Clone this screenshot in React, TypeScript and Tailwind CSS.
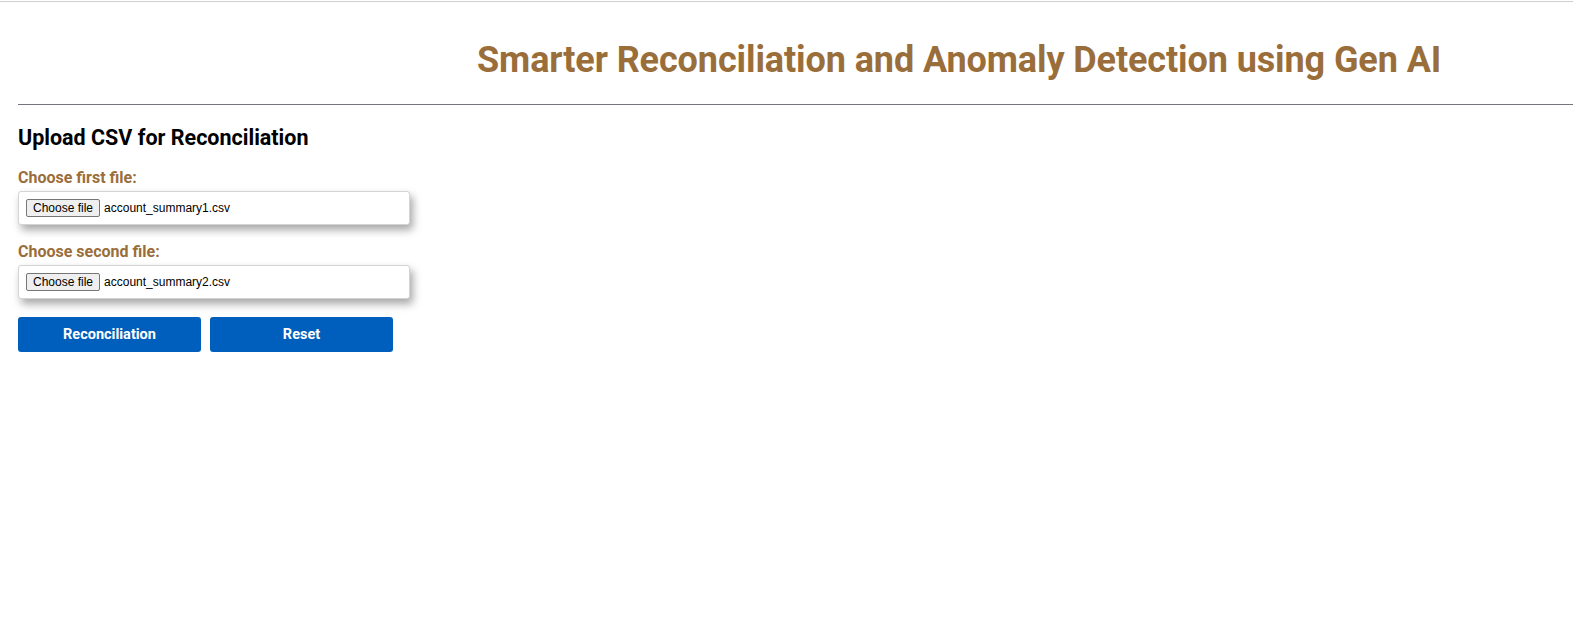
import React from "react";

function FileRow({ label, file }: { label: string; file: string }) {
  return (
    <div className="flex flex-col">
      <div className="text-[16px] font-bold leading-[20px] text-[#9a6e3a]" style={{ fontFamily: "Roboto, sans-serif" }}>
        {label}
      </div>
      <div className="mt-[3px] flex h-[34px] w-[392px] items-center rounded-[3px] border border-[#d4d4d4] bg-white px-[7px] shadow-[3px_5px_8px_rgba(0,0,0,0.35)]">
        <span
          className="flex h-[18px] items-center rounded-[2px] border border-[#767676] bg-[#efefef] px-[6px] text-[12px] text-black"
          style={{ fontFamily: "'Liberation Sans', Arial, sans-serif" }}
        >
          Choose file
        </span>
        <span className="ml-[4px] text-[12px] text-black" style={{ fontFamily: "'Liberation Sans', Arial, sans-serif" }}>
          {file}
        </span>
      </div>
    </div>
  );
}

export default function App() {
  return (
    <div className="min-h-[637px] bg-white" style={{ fontFamily: "Roboto, sans-serif" }}>
      <div className="mt-px h-px bg-[#cfcfcf]" />
      <div className="h-[102px] pl-[477px] pt-[38px]">
        <h1 className="text-[36px] font-bold leading-[40px] tracking-[-0.1px] text-[#9a6e3a]">
          Smarter Reconciliation and Anomaly Detection using Gen AI
        </h1>
      </div>
      <div className="ml-[18px] h-px bg-[#75737d]" />
      <div className="px-[18px]">
        <h2 className="mt-[20px] text-[21.5px] font-bold leading-[26px] text-black">Upload CSV for Reconciliation</h2>
        <div className="mt-[17px] flex flex-col gap-[17px]">
          <FileRow label="Choose first file:" file="account_summary1.csv" />
          <FileRow label="Choose second file:" file="account_summary2.csv" />
        </div>
        <div className="mt-[18px] flex gap-[9px]">
          <button className="h-[35px] w-[183px] rounded-[3px] bg-[#005ebd] text-[14.5px] font-bold text-white">
            Reconciliation
          </button>
          <button className="h-[35px] w-[183px] rounded-[3px] bg-[#005ebd] text-[14.5px] font-bold text-white">
            Reset
          </button>
        </div>
      </div>
    </div>
  );
}
